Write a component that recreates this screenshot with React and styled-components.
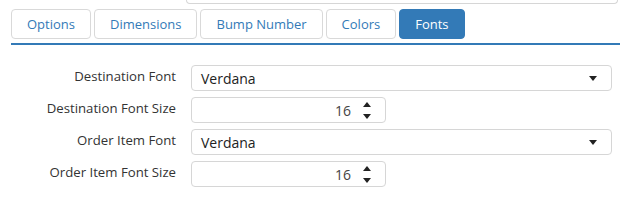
import styled, { createGlobalStyle } from "styled-components";

const Global = createGlobalStyle`
  body {
    margin: 0;
    background: #fff;
    font-family: "Open Sans", "Noto Sans", sans-serif;
    color: #333;
  }
`;

const Page = styled.div`
  width: 620px;
  height: 200px;
  overflow: hidden;
`;

const TopBox = styled.div`
  margin-left: 186px;
  margin-right: 2px;
  height: 3px;
  border: 1px solid #d6d6d6;
  border-top: none;
  border-radius: 0 0 4px 4px;
`;

const TabBar = styled.div`
  display: flex;
  gap: 3px;
  margin: 5px 0 0 11px;
  padding-bottom: 4px;
  border-bottom: 2px solid #337ab7;
`;

const Tab = styled.div`
  height: 30px;
  box-sizing: border-box;
  padding: 0 15px;
  display: flex;
  align-items: center;
  font-size: 13px;
  border: 1px solid ${(p) => (p.$active ? "#337ab7" : "#d9d9d9")};
  border-radius: 4px;
  background: ${(p) => (p.$active ? "#337ab7" : "#fff")};
  color: ${(p) => (p.$active ? "#fff" : "#337ab7")};
`;

const Form = styled.div`
  display: grid;
  grid-template-columns: 176px 421px;
  column-gap: 15px;
  row-gap: 6px;
  margin-top: 20px;
`;

const Label = styled.div`
  text-align: right;
  font-size: 13.2px;
  line-height: 18px;
  padding-top: 2px;
  color: #333;
`;

const Field = styled.div`
  box-sizing: border-box;
  height: 26px;
  width: ${(p) => p.$width || "421px"};
  border: 1px solid #d6d6d6;
  border-radius: 4px;
  display: flex;
  align-items: center;
  padding: 0 14px 0 9px;
  font-size: 14px;
  color: #222;
`;

const Value = styled.span`
  flex: 1;
  text-align: ${(p) => (p.$right ? "right" : "left")};
  color: ${(p) => (p.$right ? "#444" : "#222")};
`;

const Spinner = styled.div`
  display: flex;
  flex-direction: column;
  gap: 7px;
  margin-left: 12px;
`;

const Caret = () => (
  <svg width="8" height="5" viewBox="0 0 8 5">
    <path d="M0 0 H8 L4 5 Z" fill="#222" />
  </svg>
);

const Up = () => (
  <svg width="8" height="5" viewBox="0 0 8 5">
    <path d="M0 5 H8 L4 0 Z" fill="#222" />
  </svg>
);

const SelectField = ({ value }) => (
  <Field>
    <Value>{value}</Value>
    <Caret />
  </Field>
);

const NumberField = ({ value }) => (
  <Field $width="195px">
    <Value $right>{value}</Value>
    <Spinner>
      <Up />
      <Caret />
    </Spinner>
  </Field>
);

const tabs = ["Options", "Dimensions", "Bump Number", "Colors", "Fonts"];

export default function App() {
  return (
    <Page>
      <Global />
      <TopBox />
      <TabBar>
        {tabs.map((t) => (
          <Tab key={t} $active={t === "Fonts"}>
            {t}
          </Tab>
        ))}
      </TabBar>
      <Form>
        <Label>Destination Font</Label>
        <SelectField value="Verdana" />
        <Label>Destination Font Size</Label>
        <NumberField value="16" />
        <Label>Order Item Font</Label>
        <SelectField value="Verdana" />
        <Label>Order Item Font Size</Label>
        <NumberField value="16" />
      </Form>
    </Page>
  );
}
